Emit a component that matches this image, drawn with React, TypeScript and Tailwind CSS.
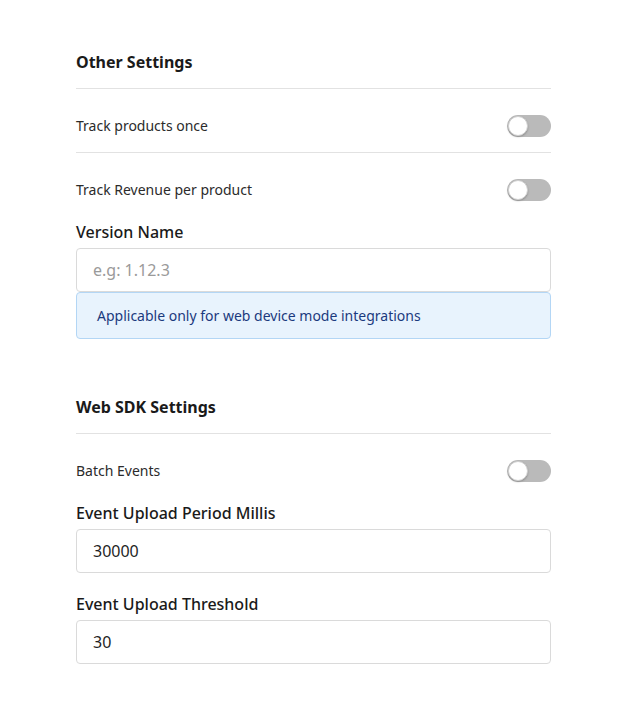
const font = { fontFamily: '"Noto Sans", "Open Sans", sans-serif' };

function Toggle() {
  return (
    <div className="relative h-[22px] w-[44px] shrink-0 rounded-full bg-[#bababa]">
      <div className="absolute left-[1px] top-[1px] h-[20px] w-[20px] rounded-full border border-[#d0d0d0] bg-white shadow-[0_1px_2px_rgba(0,0,0,0.25)]" />
    </div>
  );
}

function SectionTitle({ title }: { title: string }) {
  return (
    <div className="border-b border-[#e2e2e2] pb-[14px]">
      <h3 className="text-[16px] font-bold leading-6 text-[#1a1a1a]">{title}</h3>
    </div>
  );
}

function ToggleRow({ label, divider }: { label: string; divider?: boolean }) {
  return (
    <div
      className={
        divider
          ? "flex items-center justify-between border-b border-[#e2e2e2] pb-[15px] pt-[26px]"
          : "flex items-center justify-between pb-[15px] pt-[26px]"
      }
    >
      <span className="text-[14px] leading-5 text-[#2b2b2b]">{label}</span>
      <Toggle />
    </div>
  );
}

function Field({ label, value, placeholder }: { label: string; value?: string; placeholder?: string }) {
  return (
    <div className="mt-1">
      <label className="block text-[16px] font-medium leading-6 text-[#1a1a1a]">{label}</label>
      <div className="mt-1 flex h-11 items-center rounded border border-[#dadada] bg-white px-4">
        {value ? (
          <span className="text-[16px] text-[#1f1f1f]">{value}</span>
        ) : (
          <span className="text-[16px] text-[#9a9a9a]">{placeholder}</span>
        )}
      </div>
    </div>
  );
}

export default function App() {
  return (
    <div className="min-h-[701px] bg-white px-[76px] pt-[50px]" style={font}>
      <div className="w-[475px]">
        <SectionTitle title="Other Settings" />
        <ToggleRow label="Track products once" divider />
        <ToggleRow label="Track Revenue per product" />
        <Field label="Version Name" placeholder="e.g: 1.12.3" />
        <div className="flex h-[47px] items-center rounded border border-[#b3d6f5] bg-[#e8f3fd] px-[20px]">
          <span className="text-[14px] text-[#1b3a7e]">Applicable only for web device mode integrations</span>
        </div>

        <div className="mt-[56px]">
          <SectionTitle title="Web SDK Settings" />
          <ToggleRow label="Batch Events" />
          <Field label="Event Upload Period Millis" value="30000" />
          <div className="mt-[19px]">
            <Field label="Event Upload Threshold" value="30" />
          </div>
        </div>
      </div>
    </div>
  );
}
